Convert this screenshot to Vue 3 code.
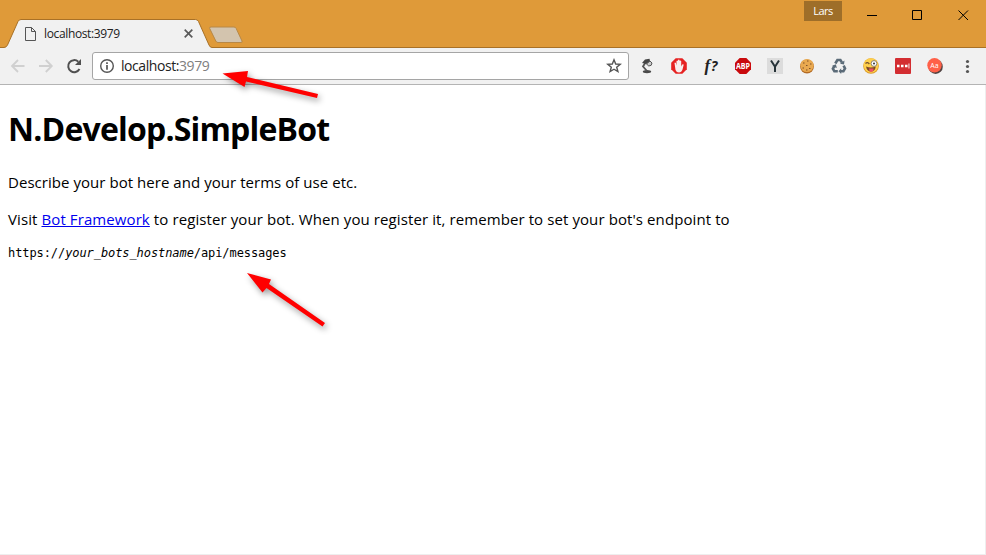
<script setup>
const title = 'localhost:3979'
</script>

<template>
  <div class="window">
    <header class="titlebar">
      <div class="tab">
        <svg class="tab-shape" width="212" height="29" viewBox="0 0 212 29">
          <path d="M0 29V28.500H4Q6.300 28.500 7.500 26L18 2.500Q19 .5 21 .5H195.500Q197.500 .5 198.500 2.500L209 26Q210 28.500 212 28.500V29Z" fill="#f1f1f1" />
          <path d="M0 28.500H4Q6.300 28.500 7.500 26L18 2.500Q19 .5 21 .5H195.500Q197.500 .5 198.500 2.500L209 26Q210 28.500 212 28.500" fill="none" stroke="#a97126" />
        </svg>
        <svg class="page-icon" width="11" height="14" viewBox="0 0 11 14" fill="none" stroke="#555">
          <path d="M.5.5H6.500L10.500 4.500V13.500H.5ZM6.500.5V4.500H10.500" />
        </svg>
        <span class="tab-title">{{ title }}</span>
        <svg class="tab-close" width="9" height="9" viewBox="0 0 9 9" stroke="#5a5a5a" stroke-width="1.700">
          <path d="M.7.7L8.300 8.300M8.300.7L.7 8.300" />
        </svg>
      </div>
      <svg class="new-tab" width="36" height="18" viewBox="0 0 36 18">
        <path d="M3 1H26Q27.500 1 28.200 2.500L34 15Q34.700 16.500 33 16.500H10Q8.500 16.500 7.800 15L1.700 2.500Q1 1 3 1Z" fill="#d3c4ae" stroke="#b88846" />
      </svg>
      <div class="spacer"></div>
      <div class="user">Lars</div>
      <svg class="controls" width="144" height="30" viewBox="0 0 144 30" fill="none" stroke="#000">
        <path d="M25 15.500H35M70.500 10.500H79.500V19.500H70.500ZM116.500 10.500L126 20M126 10.500L116.500 20" />
      </svg>
    </header>

    <nav class="toolbar">
      <svg class="nav-icons" width="76" height="18" viewBox="0 0 76 18" fill="none">
        <path d="M16.500 9H3.800M10 3L4 9L10 15M31 9H43.800M37.800 3L43.800 9L37.800 15" stroke="#d0d0d0" stroke-width="1.800" />
        <path d="M71.500 12A6 6 0 1 1 70.300 4.700" stroke="#505050" stroke-width="2" />
        <path d="M73 2V8H67Z" fill="#505050" />
      </svg>
      <div class="address">
        <svg width="16" height="16" viewBox="0 0 16 16" fill="none" stroke="#555">
          <circle cx="8" cy="8" r="6.300" stroke-width="1.400" />
          <path d="M8 7V11.700M8 4.300V5.900" stroke-width="1.700" />
        </svg>
        <span class="url">localhost:<span class="port">3979</span></span>
        <svg class="star" width="16" height="16" viewBox="0 0 16 16">
          <path d="M8 1.800L9.700 6L14.200 6.300L10.700 9.200L11.900 13.600L8 11.200L4.100 13.600L5.300 9.200L1.800 6.300L6.300 6Z" fill="none" stroke="#555" stroke-width="1.400" />
        </svg>
      </div>
      <div class="extensions">
        <svg width="16" height="16" viewBox="0 0 16 16">
          <ellipse cx="8" cy="13.600" rx="4.200" ry="1.700" fill="#4a4a4a" />
          <path d="M8 13L4 8.500L6.500 4.500" fill="none" stroke="#555" stroke-width="1.800" />
          <path d="M3 5L6 1.500L10.500.7L11 3L7.500 6Z" fill="#444" />
          <path d="M7.500 6L11 3L13 5Q13 8 9.800 8Z" fill="#ccc" stroke="#555" stroke-width="1" />
        </svg>
        <svg width="16" height="16" viewBox="0 0 16 16">
          <path d="M4.700.2H11.300L15.800 4.700V11.300L11.300 15.800H4.700L.2 11.300V4.700Z" fill="#e62222" />
          <path d="M4.500 12L3.500 5Q4 4.200 4.900 5L5.500 7.500V3Q6.300 2.200 7 3V7V2Q7.800 1.200 8.600 2V7V3Q9.400 2.200 10.200 3V8.500L11.200 6.500Q12.500 5.800 12.700 6.800L11.500 11.500Q10.500 14.500 8 14.500Q5.500 14.500 4.500 12Z" fill="#f8eeee" />
        </svg>
        <div class="formula"><span class="fq">f</span><span class="qm">?</span></div>
        <svg width="16" height="16" viewBox="0 0 16 16">
          <path d="M4.700 0H11.300L16 4.700V11.300L11.300 16H4.700L0 11.300V4.700Z" fill="#c90a0d" />
          <text x="8" y="10.900" class="abp" textLength="14" lengthAdjust="spacingAndGlyphs">ABP</text>
        </svg>
        <svg width="16" height="16" viewBox="0 0 16 16">
          <rect width="16" height="16" fill="#dcdcdc" />
          <path d="M4 2.500L8 8.700L12 2.500M8 8V14" fill="none" stroke="#263238" stroke-width="2" />
        </svg>
        <svg width="16" height="16" viewBox="0 0 16 16">
          <circle cx="8" cy="8.500" r="6.900" fill="#b36b24" />
          <circle cx="8" cy="7.500" r="6.600" fill="#e9a950" />
          <path d="M4 5h1.500M8 3h1.500M11 6h1.500M7 7.500h1.500M3.500 10h1.500M10 10.500h1.500M7 12h1.500" stroke="#805026" stroke-width="1.200" />
        </svg>
        <svg width="16" height="16" viewBox="0 0 16 16" fill="none" stroke="#5b6b78" stroke-width="2.600">
          <path d="M4.300 5.500L6.400 2H9.400L11 4.600M12.600 7.700L14 10.500L12.400 13.300H9.500M6.800 13.300H3.400L1.900 10.700L3.500 8" />
          <path d="M9 5.700L13 6.400L13.500 2.500ZM10.200 10.300L7.500 13.300L10.200 16ZM.8 8L4.800 6.300L5.900 10Z" fill="#5b6b78" stroke="none" />
        </svg>
        <svg width="16" height="16" viewBox="0 0 16 16">
          <circle cx="8" cy="8" r="7.800" fill="#dc9824" />
          <circle cx="8" cy="7.500" r="7.300" fill="#ffd04b" />
          <path d="M3 8.500Q8 10.500 12.800 8.500Q12 13.500 8 13.500Q4 13.500 3 8.500Z" fill="#7b4b27" />
          <path d="M6 10.500H10.500V12.500Q8.500 15 6.500 13Z" fill="#ee5368" />
          <path d="M2.500 5.500Q4.500 3.700 6.300 6" fill="none" stroke="#76502c" stroke-width="1.300" />
          <circle cx="11" cy="5.500" r="2.900" fill="#fff" stroke="#72695c" stroke-width=".8" />
          <circle cx="11" cy="5.500" r="1" fill="#333" />
        </svg>
        <svg width="16" height="16" viewBox="0 0 16 16">
          <rect width="16" height="16" rx="1" fill="#d32d31" />
          <path d="M2 6.700h2.500v2.500H2zM6 6.700h2.500v2.500H6zM10 6.700h2.500v2.500H10zM13.500 5.500h.9v5h-.9z" fill="#fff" />
        </svg>
        <svg width="16" height="16" viewBox="0 0 16 16">
          <circle cx="8.600" cy="8.700" r="7.200" fill="#514342" />
          <circle cx="7.500" cy="7.300" r="7.200" fill="#ff6048" />
          <text x="7.500" y="9.500" class="aa">Aa</text>
        </svg>
        <svg class="menu" width="16" height="16" viewBox="0 0 16 16" fill="#555">
          <circle cx="8.500" cy="3.500" r="1.600" /><circle cx="8.500" cy="8.500" r="1.600" /><circle cx="8.500" cy="13.500" r="1.600" />
        </svg>
      </div>
    </nav>

    <main class="page">
      <h1>N.Develop.SimpleBot</h1>
      <p class="describe">Describe your bot here and your terms of use etc.</p>
      <p class="visit">Visit <a href="#">Bot Framework</a> to register your bot. When you register it, remember to set your bot's endpoint to</p>
      <code>https://<i>your_bots_hostname</i>/api/messages</code>
    </main>

    <svg class="arrows" width="986" height="555" viewBox="0 0 986 555">
      <g fill="#f00">
        <path d="M222.500 73.500L248 71L247 77L318 94L317 98L246 81.500L244.500 87Z" />
        <path d="M247 273L271 279.500L269 284L325 323L322.500 326.500L266.500 288L262.500 292.500Z" />
      </g>
    </svg>
  </div>
</template>

<style>
body { margin: 0; background: #fff; }
</style>

<style scoped>
.window { position: relative; box-sizing: border-box; display: flex; flex-direction: column; width: 986px; height: 555px; overflow: hidden; background: #fff; font-family: "Open Sans", "Noto Sans", sans-serif; }
.titlebar { flex: none; display: flex; align-items: flex-start; box-sizing: border-box; height: 48px; background: #df9a39; border-bottom: 1px solid #a97126; }
.tab { position: relative; display: flex; align-items: center; box-sizing: border-box; width: 212px; height: 29px; margin-top: 19px; padding: 0 19px 0 25px; }
.tab-shape { position: absolute; left: 0; top: 0; }
.page-icon, .tab-title, .tab-close { position: relative; }
.tab-title { flex: 1; margin-left: 8px; font-size: 12px; line-height: 18px; letter-spacing: -0.36px; color: #222; }
.new-tab { margin: 26px 0 0 -4px; }
.spacer { flex: 1; }
.user { width: 38px; height: 20px; margin-top: 1px; background: #9e6e29; color: #fff; font-size: 11px; line-height: 20px; letter-spacing: -0.5px; text-align: center; }
.toolbar { flex: none; display: flex; align-items: center; box-sizing: border-box; height: 37px; padding-left: 8px; background: #f1f1f1; border-bottom: 1px solid #b4b4b4; }
.address { display: flex; align-items: center; box-sizing: border-box; width: 537px; height: 28px; margin-left: 8px; padding: 0 6px; border: 1px solid #a5a5a5; border-radius: 3px; background: #fff; }
.url { flex: 1; margin-left: 6px; font-size: 14px; line-height: 20px; letter-spacing: -0.43px; color: #222; }
.port { color: #808080; }
.extensions { flex: 1; display: flex; align-items: center; gap: 16px; padding-left: 10px; }
.extensions svg { flex: none; }
.formula { flex: none; display: flex; align-items: baseline; justify-content: center; width: 16px; gap: 1px; line-height: 24px; color: #222; }
.fq { font: italic bold 17px/24px "Liberation Serif", serif; }
.qm { font: italic bold 14px/24px "Open Sans", sans-serif; }
.abp { font: bold 8px "Open Sans", sans-serif; fill: #fff; text-anchor: middle; }
.aa { font: 7px "Open Sans", sans-serif; fill: #fff; text-anchor: middle; }
.page { flex: 1; padding: 22px 8px 0; border-right: 1px solid #eee; border-bottom: 1px solid #eee; color: #000; }
h1 { margin: 0; font-size: 32px; line-height: 44px; letter-spacing: -0.81px; }
p { margin: 0; font-size: 15px; line-height: 21px; white-space: nowrap; }
.describe { margin-top: 21px; letter-spacing: 0.045px; }
.visit { margin-top: 16px; letter-spacing: 0.095px; }
a { color: #0000ee; }
code { display: block; margin-top: 15px; font: 12px/16px "DejaVu Sans Mono", monospace; letter-spacing: -0.08px; }
.arrows { position: absolute; inset: 0; pointer-events: none; filter: drop-shadow(2px 3px 3px rgba(0, 0, 0, 0.4)); }
</style>
